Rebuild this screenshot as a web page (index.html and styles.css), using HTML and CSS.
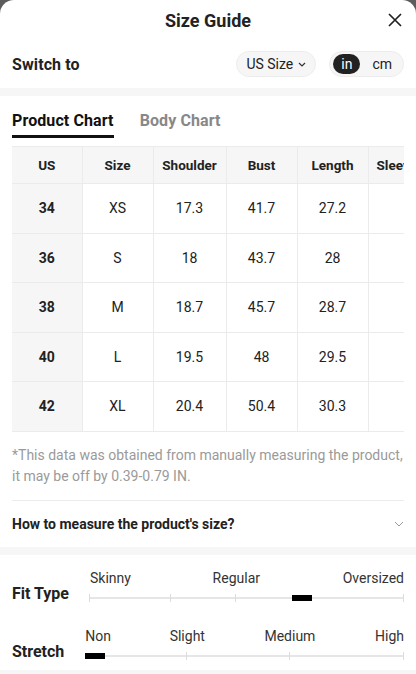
FILE: index.html
```html
<!DOCTYPE html>
<html lang="en">
<head>
    <meta charset="UTF-8">
    <meta name="viewport" content="width=device-width, initial-scale=1.0">
    <title>Size Guide</title>
    <link rel="stylesheet" href="styles.css">
</head>
<body>
    <div class="sheet">
        <div class="sheet-header">
            <h2>Size Guide</h2>
            <button class="close-btn" aria-label="Close">
                <svg width="14" height="14" viewBox="0 0 14 14"><path d="M1 1L13 13M13 1L1 13" stroke="#222" stroke-width="1.7" fill="none"/></svg>
            </button>
        </div>

        <div class="switch-row">
            <span class="switch-label">Switch to</span>
            <div class="switch-controls">
                <button class="size-select">US Size
                    <svg width="8" height="5" viewBox="0 0 8 5"><path d="M1 1L4 4L7 1" stroke="#333" stroke-width="1.2" fill="none"/></svg>
                </button>
                <div class="unit-toggle">
                    <span class="unit active">in</span>
                    <span class="unit">cm</span>
                </div>
            </div>
        </div>

        <div class="band"></div>

        <div class="tabs">
            <div class="tab active">Product Chart</div>
            <div class="tab">Body Chart</div>
        </div>

        <div class="chart-wrap">
            <table class="chart">
                <colgroup>
                    <col style="width:70px"><col style="width:71px"><col style="width:73px">
                    <col style="width:71px"><col style="width:71px"><col style="width:71px">
                </colgroup>
                <thead>
                    <tr><th>US</th><th>Size</th><th>Shoulder</th><th>Bust</th><th>Length</th><th>Sleeve</th></tr>
                </thead>
                <tbody>
                    <tr><td>34</td><td>XS</td><td>17.3</td><td>41.7</td><td>27.2</td><td></td></tr>
                    <tr><td>36</td><td>S</td><td>18</td><td>43.7</td><td>28</td><td></td></tr>
                    <tr><td>38</td><td>M</td><td>18.7</td><td>45.7</td><td>28.7</td><td></td></tr>
                    <tr><td>40</td><td>L</td><td>19.5</td><td>48</td><td>29.5</td><td></td></tr>
                    <tr><td>42</td><td>XL</td><td>20.4</td><td>50.4</td><td>30.3</td><td></td></tr>
                </tbody>
            </table>
        </div>

        <p class="chart-note">*This data was obtained from manually measuring the product, it may be off by 0.39-0.79 IN.</p>

        <div class="measure-row">
            <span>How to measure the product's size?</span>
            <svg width="10" height="6" viewBox="0 0 10 6"><path d="M1 1L5 5L9 1" stroke="#999" stroke-width="1" fill="none"/></svg>
        </div>

        <div class="band"></div>

        <div class="fit-section">
            <div class="fit-row">
                <span class="fit-label">Fit Type</span>
                <div class="scale scale-fit">
                    <div class="scale-labels">
                        <span class="first">Skinny</span>
                        <span style="left:46.6%">Regular</span>
                        <span class="last">Oversized</span>
                    </div>
                    <div class="track">
                        <i class="tick" style="left:0"></i>
                        <i class="tick" style="left:25.9%"></i>
                        <i class="tick" style="left:46.6%"></i>
                        <i class="tick" style="left:100%"></i>
                        <b class="marker" style="left:64.2%"></b>
                    </div>
                </div>
            </div>
            <div class="fit-row">
                <span class="fit-label">Stretch</span>
                <div class="scale scale-stretch">
                    <div class="scale-labels">
                        <span class="first">Non</span>
                        <span style="left:32%">Slight</span>
                        <span style="left:64.2%">Medium</span>
                        <span class="last">High</span>
                    </div>
                    <div class="track">
                        <i class="tick" style="left:32%"></i>
                        <i class="tick" style="left:64.2%"></i>
                        <i class="tick" style="left:100%"></i>
                        <b class="marker" style="left:0"></b>
                    </div>
                </div>
            </div>
        </div>

        <div class="band"></div>
    </div>
</body>
</html>
```

FILE: styles.css
```css
body {
    margin: 0;
    padding: 0;
    background: #5c5c5c;
    font-family: Roboto, "Liberation Sans", sans-serif;
    color: #222;
}

.sheet {
    background: #fff;
    border-radius: 14px 14px 0 0;
    min-height: 674px;
    overflow: hidden;
}

.sheet-header {
    height: 40px;
    display: flex;
    align-items: center;
    justify-content: center;
    position: relative;
}

.sheet-header h2 {
    margin: 0;
    font-size: 18px;
    font-weight: 700;
}

.close-btn {
    position: absolute;
    right: 14px;
    top: 13px;
    border: none;
    background: none;
    padding: 0;
    width: 14px;
    height: 14px;
    display: flex;
}

.switch-row {
    height: 48px;
    display: flex;
    align-items: center;
    justify-content: space-between;
    padding: 0 12px;
}

.switch-label {
    font-size: 16px;
    font-weight: 700;
    letter-spacing: 0.1px;
}

.switch-controls {
    display: flex;
    gap: 13px;
}

.size-select {
    height: 26px;
    padding: 0 9px 0 9px;
    border: 1px solid #ececec;
    border-radius: 13px;
    background: #f6f6f6;
    font-family: inherit;
    font-size: 14px;
    color: #222;
    display: flex;
    align-items: center;
    gap: 5px;
}

.unit-toggle {
    height: 26px;
    box-sizing: border-box;
    padding: 2px 3px;
    border: 1px solid #ececec;
    border-radius: 13px;
    background: #f6f6f6;
    display: flex;
    align-items: center;
}

.unit {
    height: 20px;
    line-height: 20px;
    padding: 0 8px;
    border-radius: 10px;
    font-size: 14px;
    color: #222;
}

.unit.active {
    background: #222;
    color: #fff;
    margin-right: 4px;
}

.band {
    height: 8px;
    background: #f6f6f6;
}

.tabs {
    display: flex;
    gap: 26px;
    padding: 15px 12px 0;
}

.tab {
    font-size: 16px;
    font-weight: 700;
    line-height: 20px;
    letter-spacing: 0.1px;
    color: #888;
    padding-bottom: 4px;
    border-bottom: 3px solid transparent;
}

.tab.active {
    color: #111;
    border-bottom-color: #111;
}

.chart-wrap {
    margin: 8px 12px 0;
    overflow: hidden;
}

.chart {
    border-collapse: collapse;
    table-layout: fixed;
    width: 427px;
    font-size: 14px;
    text-align: center;
}

.chart th,
.chart td {
    border: 1px solid #ebebeb;
    padding: 0;
    white-space: nowrap;
    overflow: hidden;
}

.chart th {
    background: #f6f6f6;
    font-weight: 700;
    font-size: 13.5px;
    height: 36px;
    text-align: center;
}

.chart th:last-child {
    text-align: left;
    padding-left: 8px;
}

.chart td {
    height: 48.5px;
}

.chart td:first-child {
    background: #f6f6f6;
    font-weight: 700;
}

.chart tr > :first-child {
    border-left: none;
}

.chart-note {
    margin: 13px 12px 0;
    font-size: 14px;
    line-height: 21px;
    color: #9a9a9a;
    padding-bottom: 13px;
    border-bottom: 1px solid #ececec;
}

.measure-row {
    height: 46px;
    padding: 0 12px;
    display: flex;
    align-items: center;
    justify-content: space-between;
    font-size: 14px;
    font-weight: 700;
}

.fit-section {
    padding: 13px 12px 10px;
    display: flex;
    flex-direction: column;
    gap: 24px;
}

.fit-row {
    display: flex;
    align-items: flex-end;
}

.fit-label {
    font-size: 16px;
    font-weight: 700;
    line-height: 20px;
    margin-bottom: -2px;
}

.scale {
    flex: 1;
}

.scale-fit {
    margin-left: 21px;
}

.scale-stretch {
    margin-left: 21px;
}

.scale-labels {
    position: relative;
    height: 20px;
    font-size: 14px;
    line-height: 20px;
    color: #333;
}

.scale-labels span {
    position: absolute;
    top: 0;
    transform: translateX(-50%);
    white-space: nowrap;
}

.scale-labels .first {
    left: 0;
    transform: none;
}

.scale-labels .last {
    right: 0;
    left: auto;
    transform: none;
}

.track {
    position: relative;
    height: 2px;
    margin: 9px 0 3px;
    background: #e6e6e6;
}

.tick {
    position: absolute;
    top: -3px;
    width: 1px;
    height: 8px;
    background: #dcdcdc;
    margin-left: -1px;
}

.marker {
    position: absolute;
    top: -2px;
    width: 20px;
    height: 6px;
    background: #000;
}
```
